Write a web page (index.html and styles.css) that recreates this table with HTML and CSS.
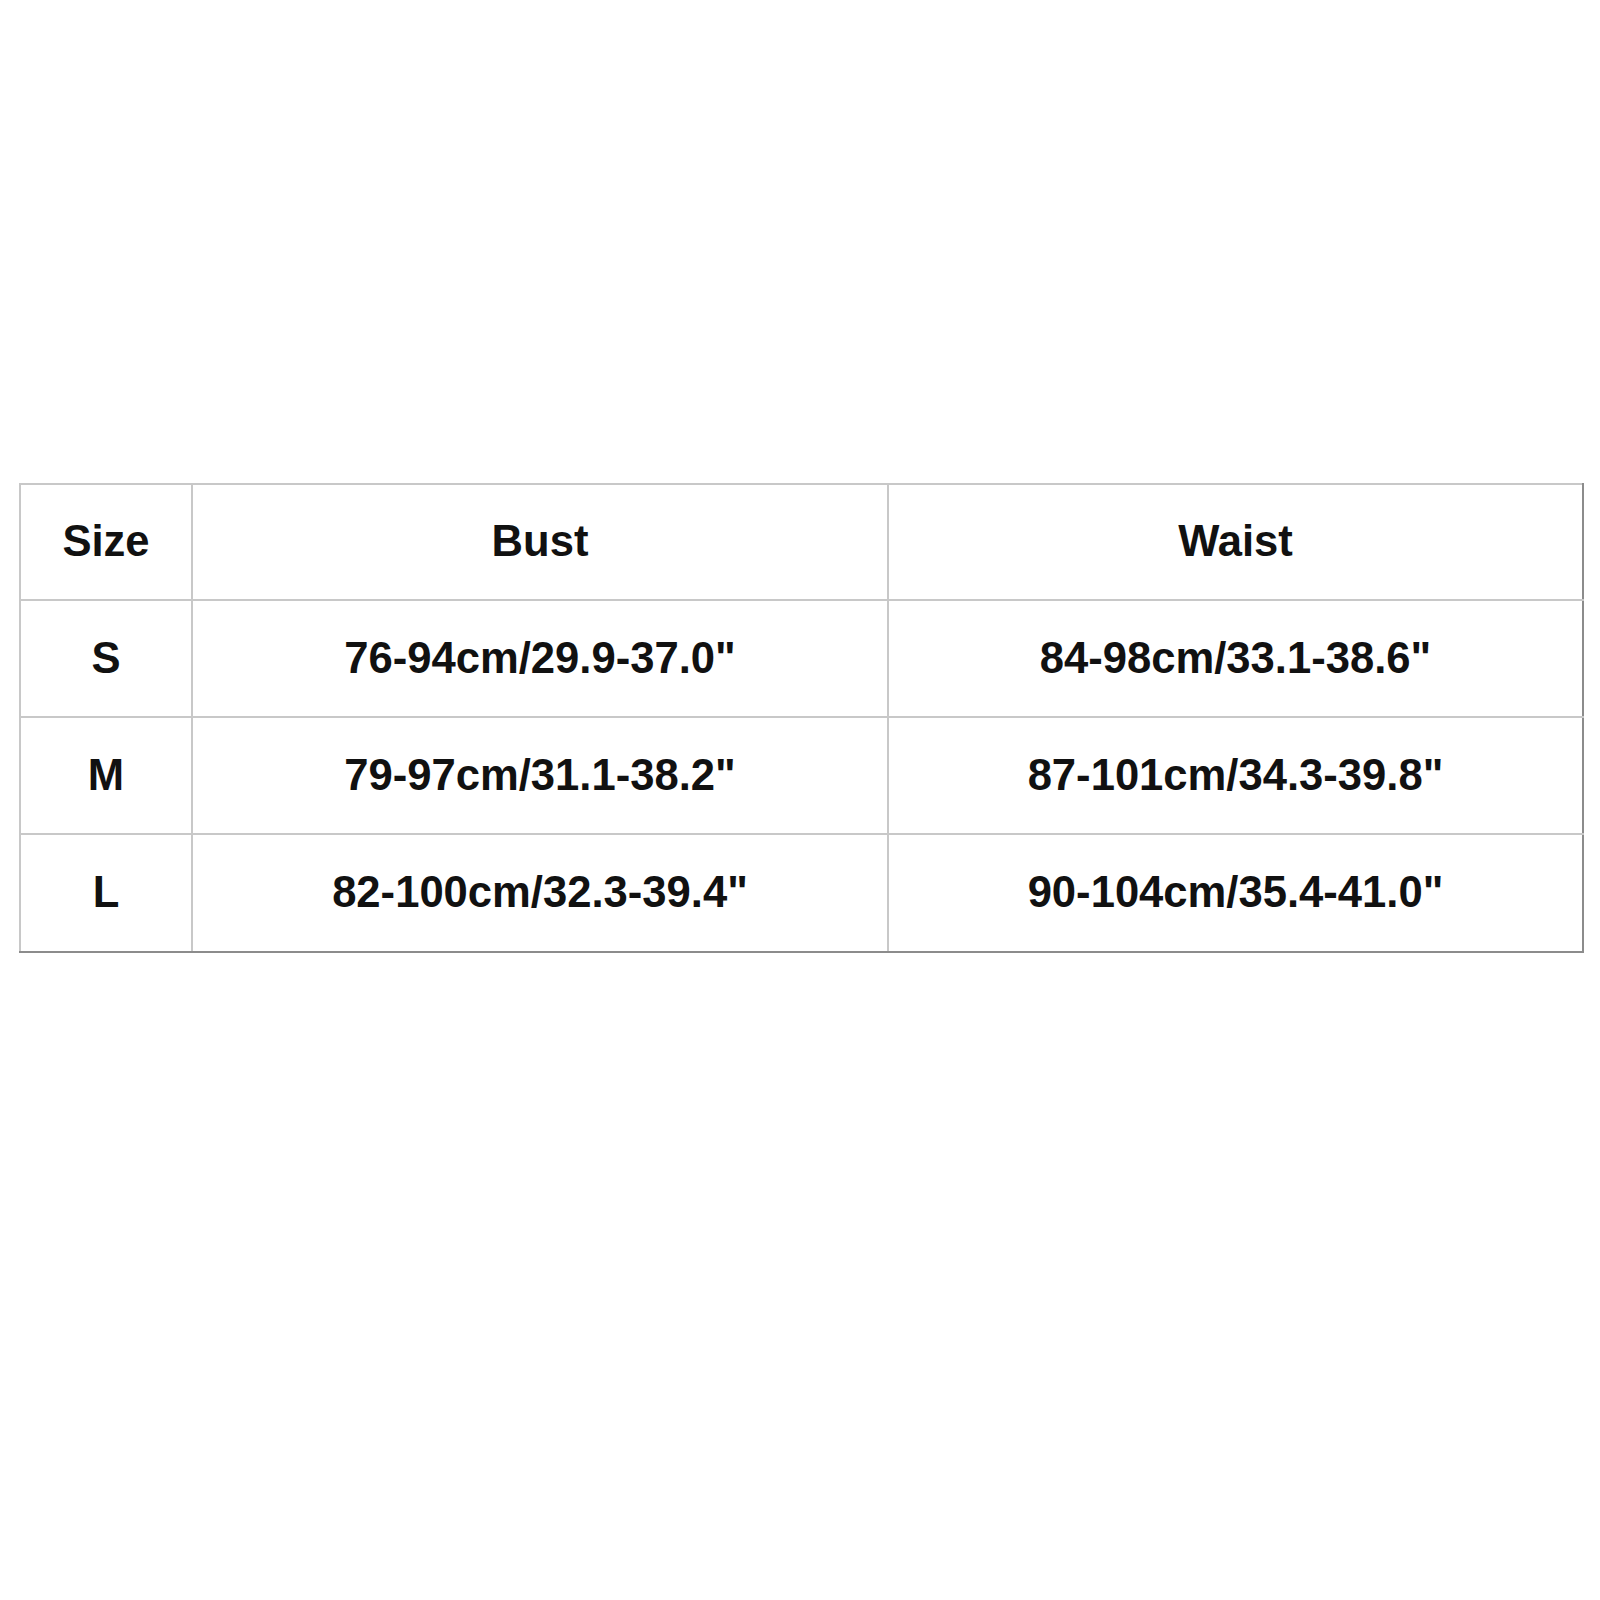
FILE: index.html
```html
<!DOCTYPE html>
<html>
<head>
<meta charset="utf-8">
<link rel="stylesheet" href="styles.css">
</head>
<body>
<div class="page">
<table class="sizes">
<colgroup><col class="c1"><col class="c2"><col class="c3"></colgroup>
<tr class="head"><td>Size</td><td>Bust</td><td>Waist</td></tr>
<tr><td>S</td><td>76-94cm/29.9-37.0"</td><td>84-98cm/33.1-38.6"</td></tr>
<tr><td>M</td><td>79-97cm/31.1-38.2"</td><td>87-101cm/34.3-39.8"</td></tr>
<tr class="last"><td>L</td><td>82-100cm/32.3-39.4"</td><td>90-104cm/35.4-41.0"</td></tr>
</table>
</div>
</body>
</html>
```
FILE: styles.css
```css
html, body {
  margin: 0;
  padding: 0;
  background: #ffffff;
}
.page {
  padding: 483px 0 0 19px;
  height: 1117px;
}
.sizes {
  border-collapse: collapse;
  width: 1563px;
  table-layout: fixed;
  font-family: "Liberation Sans", Arial, sans-serif;
  font-weight: bold;
  font-size: 43.6px;
  color: #111111;
}
.c1 { width: 172px; }
.c2 { width: 696px; }
.c3 { width: 695px; }
.sizes td {
  border: 2px solid #c8c8c8;
  height: 115px;
  padding: 0;
  text-align: center;
  vertical-align: middle;
  line-height: 1;
}
.sizes .head td {
  height: 114px;
}
.sizes .last td {
  height: 116px;
  border-bottom-color: #8c8c8c;
}
.sizes tr td:last-child {
  border-right-color: #8c8c8c;
}
```
